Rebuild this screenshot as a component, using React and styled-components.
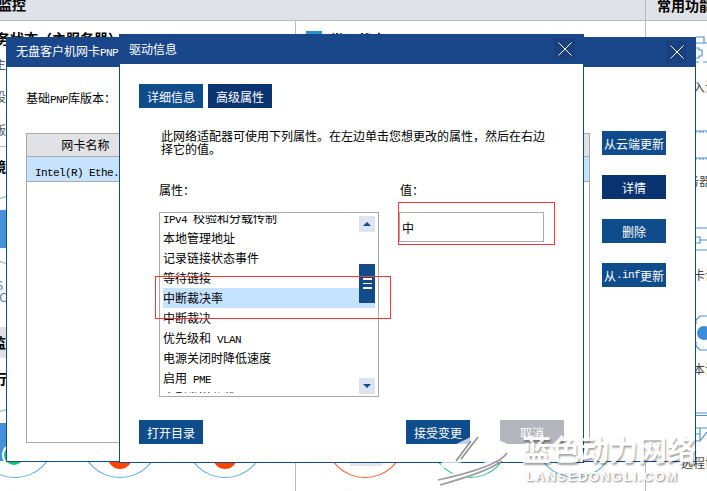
import styled, { createGlobalStyle } from 'styled-components';

const cjk = '"Noto Sans CJK SC", "Liberation Sans", sans-serif';

const GlobalStyle = createGlobalStyle`
    html, body {
        margin: 0;
        padding: 0;
        background: #fff;
    }
    * {
        box-sizing: border-box;
    }
`;

const Page = styled.div`
    position: relative;
    width: 707px;
    height: 491px;
    overflow: hidden;
    background: #fff;
    font-family: ${cjk};
    font-size: 12px;
    color: #000;
`;

const Latin = styled.span`
    font-family: "Liberation Mono", monospace;
    font-size: 11px;
    letter-spacing: -0.6px;
    white-space: pre;
`;

/* page behind the dialogs */
const HeaderBar = styled.div`
    display: flex;
    height: 21px;
    background: #dee2e6;
    border-bottom: 1px solid #bbb;
`;

const HeaderTitle = styled.div`
    width: 647px;
    flex: none;
    margin-left: -2px;
    font-size: 14px;
    font-weight: 700;
    line-height: 8px;
`;

const HeaderRight = styled.div`
    flex: 1;
    border-left: 1px solid #bbb;
    padding-left: 11px;
    font-size: 14px;
    font-weight: 700;
    line-height: 10px;
    white-space: nowrap;
`;

const Columns = styled.div`
    display: flex;
    height: 470px;
`;

const LeftColumn = styled.div`
    width: 296px;
    flex: none;
    border-right: 1px solid #bbb;
    display: flex;
    flex-direction: column;
`;

const MiddleColumn = styled.div`
    width: 350px;
    flex: none;
    border-right: 1px solid #bbb;
    padding-top: 10px;
    position: relative;
`;

const RightColumn = styled.div`
    width: 118px;
    flex: none;
    display: flex;
    flex-direction: column;
`;

const StatusSection = styled.div`
    height: 126px;
    flex: none;
    padding-top: 9px;
    border-bottom: 1px solid #bbb;
`;

const ChartSection = styled.div`
    height: 180px;
    flex: none;
    padding-top: 11px;
`;

const GrayBand = styled.div`
    height: 31px;
    flex: none;
    background: #dee2e6;
    font-size: 14px;
    font-weight: 700;
    line-height: 30px;
    padding-left: 0;
    text-indent: -8px;
`;

const TasksSection = styled.div`
    flex: none;
    height: 133px;
    padding-top: 12px;
`;

const SectionTitle = styled.div`
    font-size: 14px;
    font-weight: 700;
    line-height: 17px;
    white-space: nowrap;
    margin-left: ${(p) => p.$offset || 0}px;
`;

const InfoRow = styled.div`
    height: 33px;
    line-height: 33px;
    color: #555;
    white-space: nowrap;
    margin-left: -6px;
`;

const RingRow = styled.div`
    display: flex;
    gap: 29px;
    margin-top: ${(p) => p.$top}px;
    margin-left: ${(p) => p.$left}px;
`;

const RingCell = styled.div`
    width: 76px;
    flex: none;
    display: flex;
    flex-direction: column;
    align-items: center;
`;

const Ring = styled.div`
    position: relative;
    width: 76px;
    height: 70px;
    flex: none;
    border-radius: 50%;
    border: 1px solid ${(p) => p.$color};
`;

const RingBlock = styled.div`
    position: absolute;
    left: 22px;
    top: 14px;
    width: 32px;
    height: 38px;
    background: #4590d8;
`;

const RingDot = styled.div`
    position: absolute;
    left: ${(p) => p.$x}px;
    top: ${(p) => p.$y}px;
    width: ${(p) => p.$size}px;
    height: ${(p) => p.$size}px;
    border-radius: 50%;
    background: ${(p) => p.$color};
    box-shadow: 0 0 0 ${(p) => (p.$halo ? 2 : 0)}px #fff;
`;

const RingBar = styled.div`
    position: absolute;
    left: 22px;
    top: 54px;
    width: 32px;
    height: 3px;
    background: #e4e6ea;
`;

const RingLabel = styled.div`
    margin-top: 12px;
    line-height: 14px;
    white-space: nowrap;
    color: ${(p) => p.$color || '#444'};
`;

const ChartCaption = styled.div`
    margin-top: ${(p) => p.$top || 0}px;
    margin-left: -8px;
    font-size: 12px;
    line-height: 12px;
    color: #4f7ea8;
`;

const MiddleHead = styled.div`
    display: flex;
    align-items: flex-start;
    gap: 8px;
    padding-left: 10px;
    font-size: 14px;
    font-weight: 700;
    line-height: 17px;
`;

const MiddleIcon = styled.div`
    width: 16px;
    height: 16px;
    background: #2b8fd0;
`;

const MiddleRings = styled.div`
    position: absolute;
    left: 31px;
    top: 387px;
    display: flex;
    gap: 29px;
`;

const ToolCell = styled.div`
    height: 94px;
    flex: none;
    display: flex;
    flex-direction: column;
    align-items: center;
    justify-content: flex-end;
    &:first-child {
        height: 73px;
    }
`;

const ToolLabel = styled.div`
    line-height: 14px;
    color: #444;
    white-space: nowrap;
`;

const ToolIcon = styled.svg`
    flex: 1;
    width: 60px;
    margin-bottom: 6px;
`;

/* dialogs */
const Dialog = styled.div`
    position: absolute;
    left: ${(p) => p.$x}px;
    top: ${(p) => p.$y}px;
    width: ${(p) => p.$w}px;
    height: ${(p) => p.$h}px;
    display: flex;
    flex-direction: column;
`;

const TitleBar = styled.div`
    height: 30px;
    flex: none;
    background: #19478a;
    color: #fff;
    display: flex;
    align-items: center;
    justify-content: space-between;
    padding: 0 9px 0 10px;
    line-height: 30px;
    white-space: nowrap;
    overflow: hidden;
`;

const CloseButton = styled.div`
    width: 21px;
    height: 22px;
    background: #1a4080;
    display: flex;
    align-items: center;
    justify-content: center;
`;

const DialogBody = styled.div`
    flex: 1;
    background: #fff;
    border: 1px solid #134a8a;
    border-top: none;
`;

const PnpBody = styled(DialogBody)`
    display: flex;
    padding: 24px 0 0 19px;
`;

const PnpMain = styled.div`
    width: 564px;
    flex: none;
`;

const VersionLabel = styled.div`
    line-height: 14px;
`;

const AdapterTable = styled.div`
    margin-top: 26px;
    height: 310px;
    border: 1px solid #aaa;
`;

const TableHead = styled.div`
    height: 23px;
    background: #e0e2e6;
    border-bottom: 1px solid #aaa;
    line-height: 22px;
`;

const TableHeadCell = styled.div`
    width: 117px;
    text-align: center;
    letter-spacing: 0.1px;
`;

const TableRow = styled.div`
    height: 25px;
    background: #c5e2ff;
    border-bottom: 1px solid #aaa;
    padding-left: 8px;
    line-height: 28px;
`;

const SideButtons = styled.div`
    display: flex;
    flex-direction: column;
    gap: 20px;
    margin-left: 12px;
    padding-top: 40px;
`;

const Button = styled.div`
    width: 64px;
    height: 24px;
    flex: none;
    display: flex;
    align-items: center;
    justify-content: center;
    color: #fff;
    white-space: pre;
    background: ${(p) => (p.$tone === 'dark' ? '#0a3470' : p.$tone === 'off' ? '#b5b5bd' : '#0f4c8c')};
`;

const DriverBody = styled(DialogBody)`
    padding: 20px 19px 0;
`;

const Tabs = styled.div`
    display: flex;
    gap: 5px;
`;

const Description = styled.div`
    margin: 21px 0 0 22px;
    line-height: 13px;
    white-space: nowrap;
`;

const Fields = styled.div`
    display: flex;
    gap: 20px;
    margin: 28px 0 0 20px;
`;

const FieldLabel = styled.div`
    line-height: 14px;
    margin-bottom: 15px;
    padding-left: ${(p) => p.$indent || 0}px;
`;

const PropertyList = styled.div`
    position: relative;
    width: 220px;
    height: 185px;
    border: 1px solid #aaa;
    padding: 2px 3px;
`;

const ListClip = styled.div`
    height: 178px;
    overflow: hidden;
`;

const ListItems = styled.div`
    margin-top: -7px;
`;

const ListItem = styled.div`
    height: 20px;
    line-height: 20px;
    white-space: nowrap;
    background: ${(p) => (p.$selected ? '#c5e2ff' : 'transparent')};
`;

const ScrollBar = styled.div`
    position: absolute;
    right: 3px;
    top: 3px;
    width: 16px;
    height: 178px;
    display: flex;
    flex-direction: column;
`;

const ScrollArrow = styled.div`
    width: 16px;
    height: 16px;
    background: #dfe3f0;
    display: flex;
    align-items: center;
    justify-content: center;
`;

const Triangle = styled.div`
    width: 0;
    height: 0;
    border-left: 4px solid transparent;
    border-right: 4px solid transparent;
    border-${(p) => (p.$down ? 'top' : 'bottom')}: 4px solid #134a8a;
`;

const ScrollThumb = styled.div`
    height: 39px;
    margin: 32px 0 75px;
    background: #134a8a;
    display: flex;
    flex-direction: column;
    align-items: center;
    gap: 3px;
    padding-top: 14px;
`;

const ThumbLine = styled.div`
    width: 9px;
    height: 1.5px;
    background: #fff;
`;

const ValueBox = styled.div`
    width: 145px;
    height: 30px;
    border: 1px solid #aaa;
    padding-left: 2px;
    line-height: 30px;
`;

const Footer = styled.div`
    display: flex;
    justify-content: space-between;
    margin-top: 23px;
`;

const FooterRight = styled.div`
    display: flex;
    gap: 30px;
`;

const Callout = styled.div`
    position: absolute;
    left: ${(p) => p.$x}px;
    top: ${(p) => p.$y}px;
    width: ${(p) => p.$w}px;
    height: 43px;
    border: 1px solid #f33;
`;

/* watermark */
const LogoMark = styled.svg`
    position: absolute;
    left: 430px;
    top: 425px;
    width: 95px;
    height: 66px;
`;

const Watermark = styled.div`
    position: absolute;
    left: 522px;
    top: 430px;
    width: 180px;
    display: flex;
    flex-direction: column;
    color: #fff;
`;

const WatermarkName = styled.div`
    font-size: 29px;
    font-weight: 700;
    line-height: 36px;
    white-space: nowrap;
    opacity: 0.9;
    text-shadow: 1px 2px 2px rgba(0, 0, 0, 0.4);
`;

const WatermarkUrl = styled.div`
    margin-top: 4px;
    padding-left: 4px;
    font-family: "Liberation Sans", sans-serif;
    font-size: 13px;
    font-weight: 700;
    line-height: 14px;
    letter-spacing: 1.6px;
    white-space: nowrap;
    text-shadow: 1px 1px 2px rgba(0, 0, 0, 0.5);
`;

const Close = () => (
    <CloseButton>
        <svg width="14" height="14" viewBox="0 0 14 14">
            <path d="M0.5 0.5 L13.5 13.5 M13.5 0.5 L0.5 13.5" stroke="#fff" strokeWidth="1" fill="none" />
        </svg>
    </CloseButton>
);

const properties = [
    <><Latin>IPv4 </Latin>校验和分载传制</>,
    '本地管理地址',
    '记录链接状态事件',
    '等待链接',
    '中断裁决率',
    '中断裁决',
    <>优先级和<Latin> VLAN</Latin></>,
    '电源关闭时降低速度',
    <>启用<Latin> PME</Latin></>,
    <>大型发送分载<Latin> V2 (IPv4)</Latin></>,
];

// right hand tool icons, drawn in page coordinates
const tools = [
    {
        label: '接入设备',
        top: 21,
        height: 53,
        shapes: 'M696 37 H704 V43 H696 M704 43 H720 M696 48 H699 V50 H702 V56 H699 V58 H696 M696 62 H699 M703 62 H708',
    },
    {
        label: '服务器管理',
        top: 94,
        height: 74,
        shapes: 'M696 133 V131 H700 V133 M700 131 H703 V133 M703 131 H707 V133 M696 160 V158 H700 V160 M700 158 H703 V160 M703 158 H707 V160',
    },
    {
        label: '网卡设置',
        top: 188,
        height: 74,
        shapes: 'M696 228 H720 M696 237 H700 V243 H696 M700 240 H720 M696 250 H707',
    },
    {
        label: '版本设置',
        top: 282,
        height: 74,
        shapes: 'M696 320 L700 316 H707 M696 346 L700 350 H707 M696 320 V324 M696 342 V346',
        disc: true,
    },
    {
        label: '远程协助',
        top: 376,
        height: 74,
        shapes: 'M696 413 H720 M696 415.5 H720 M696 428 H707 M700 428 V441 H696 M696 434 H700 M700 441 L707 432',
    },
];

const App = () => {
    return (
        <Page>
            <GlobalStyle />
            <HeaderBar>
                <HeaderTitle>监控</HeaderTitle>
                <HeaderRight>常用功能</HeaderRight>
            </HeaderBar>
            <Columns>
                <LeftColumn>
                    <StatusSection>
                        <SectionTitle $offset={-4}>务状态（主服务器）</SectionTitle>
                        <InfoRow>主机名</InfoRow>
                        <InfoRow>设备</InfoRow>
                        <InfoRow>版本</InfoRow>
                    </StatusSection>
                    <ChartSection>
                        <SectionTitle $offset={-8}>镜像</SectionTitle>
                        <RingRow $top={20} $left={-23}>
                            <RingCell>
                                <Ring $color="#5aa9de">
                                    <RingBlock />
                                </Ring>
                            </RingCell>
                        </RingRow>
                        <ChartCaption $top={14}>-S</ChartCaption>
                        <ChartCaption>AC</ChartCaption>
                    </ChartSection>
                    <GrayBand>监控</GrayBand>
                    <TasksSection>
                        <SectionTitle $offset={-7}>行</SectionTitle>
                        <RingRow $top={21} $left={-23}>
                            <RingCell>
                                <Ring $color="#5aa9de">
                                    <RingBlock />
                                    <RingDot $x={26} $y={36} $size={20} $color="#14c27c" $halo />
                                </Ring>
                                <RingLabel>网络状态</RingLabel>
                            </RingCell>
                            <RingCell>
                                <Ring $color="#5aa9de">
                                    <RingDot $x={25} $y={36} $size={24} $color="#ff4400" />
                                </Ring>
                                <RingLabel>系统服务</RingLabel>
                            </RingCell>
                            <RingCell>
                                <Ring $color="#5aa9de">
                                    <RingDot $x={25} $y={36} $size={24} $color="#ff4400" />
                                </Ring>
                                <RingLabel $color="#ff4400">U盘未连接</RingLabel>
                            </RingCell>
                        </RingRow>
                    </TasksSection>
                </LeftColumn>
                <MiddleColumn>
                    <MiddleHead>
                        <MiddleIcon />
                        <span>常见状态</span>
                    </MiddleHead>
                    <MiddleRings>
                        <RingCell>
                            <Ring $color="#ff5a2c">
                                <RingBar />
                            </Ring>
                            <RingLabel>磁盘空间</RingLabel>
                        </RingCell>
                        <RingCell>
                            <Ring $color="#2ebd7c" />
                            <RingLabel>内存使用</RingLabel>
                        </RingCell>
                        <RingCell>
                            <Ring $color="#5aa9de" />
                            <RingLabel>处理器</RingLabel>
                        </RingCell>
                    </MiddleRings>
                </MiddleColumn>
                <RightColumn>
                    {tools.map((tool) => (
                        <ToolCell key={tool.label}>
                            <ToolIcon viewBox={`675 ${tool.top} 60 ${tool.height}`} preserveAspectRatio="xMidYMin meet">
                                <path d={tool.shapes} fill="none" stroke="#4a94d8" strokeWidth="1.2" />
                                {tool.disc && <circle cx="704" cy="333" r="7" fill="#3d8cdc" />}
                            </ToolIcon>
                            <ToolLabel>{tool.label}</ToolLabel>
                        </ToolCell>
                    ))}
                </RightColumn>
            </Columns>

            <Dialog $x={6} $y={37} $w={690} $h={425}>
                <TitleBar>
                    <span>无盘客户机网卡<Latin>PNP</Latin></span>
                    <Close />
                </TitleBar>
                <PnpBody>
                    <PnpMain>
                        <VersionLabel>基础<Latin>PNP</Latin>库版本：</VersionLabel>
                        <AdapterTable>
                            <TableHead>
                                <TableHeadCell>网卡名称</TableHeadCell>
                            </TableHead>
                            <TableRow><Latin>Intel(R) Ethe.</Latin></TableRow>
                        </AdapterTable>
                    </PnpMain>
                    <SideButtons>
                        <Button>从云端更新</Button>
                        <Button $tone="dark">详情</Button>
                        <Button>删除</Button>
                        <Button>从<Latin>.inf</Latin>更新</Button>
                    </SideButtons>
                </PnpBody>
            </Dialog>

            <Dialog $x={119} $y={34} $w={465} $h={429}>
                <TitleBar>
                    <span>驱动信息</span>
                    <Close />
                </TitleBar>
                <DriverBody>
                    <Tabs>
                        <Button>详细信息</Button>
                        <Button $tone="dark">高级属性</Button>
                    </Tabs>
                    <Description>
                        此网络适配器可使用下列属性。在左边单击您想更改的属性，然后在右边
                        <br />
                        择它的值。
                    </Description>
                    <Fields>
                        <div>
                            <FieldLabel>属性：</FieldLabel>
                            <PropertyList>
                                <ListClip>
                                    <ListItems>
                                        {properties.map((item, i) => (
                                            <ListItem key={i} $selected={i === 4}>{item}</ListItem>
                                        ))}
                                    </ListItems>
                                </ListClip>
                                <ScrollBar>
                                    <ScrollArrow><Triangle /></ScrollArrow>
                                    <ScrollThumb>
                                        <ThumbLine />
                                        <ThumbLine />
                                        <ThumbLine />
                                    </ScrollThumb>
                                    <ScrollArrow><Triangle $down /></ScrollArrow>
                                </ScrollBar>
                            </PropertyList>
                        </div>
                        <div>
                            <FieldLabel $indent={1}>值：</FieldLabel>
                            <ValueBox>中</ValueBox>
                        </div>
                    </Fields>
                    <Footer>
                        <Button>打开目录</Button>
                        <FooterRight>
                            <Button>接受变更</Button>
                            <Button $tone="off">取消</Button>
                        </FooterRight>
                    </Footer>
                </DriverBody>
                <Callout $x={279} $y={168} $w={157} />
                <Callout $x={36} $y={242} $w={236} />
            </Dialog>

            <LogoMark viewBox="430 425 95 66">
                <path d="M485 430 L450 447 L438 470 L462 462 Z" fill="#fff" fillOpacity="0.75" />
                <path d="M478 437 L461 459 M471 441 L456 461" stroke="#8f8f8f" strokeWidth="1.6" fill="none" />
                <path d="M478 441 C496 437 511 442 509 450 C505 463 470 477 440 490 L433 478 C460 472 489 464 497 454 C501 447 490 443 478 441 Z" fill="#fff" fillOpacity="0.88" />
                <path d="M507 453 C500 464 470 473 438 480 M502 461 C488 471 464 478 440 485" stroke="#9c9c9c" strokeWidth="1.6" fill="none" />
            </LogoMark>
            <Watermark>
                <WatermarkName>蓝色动力网络</WatermarkName>
                <WatermarkUrl>LANSEDONGLI.COM</WatermarkUrl>
            </Watermark>
        </Page>
    );
};

export default App;
